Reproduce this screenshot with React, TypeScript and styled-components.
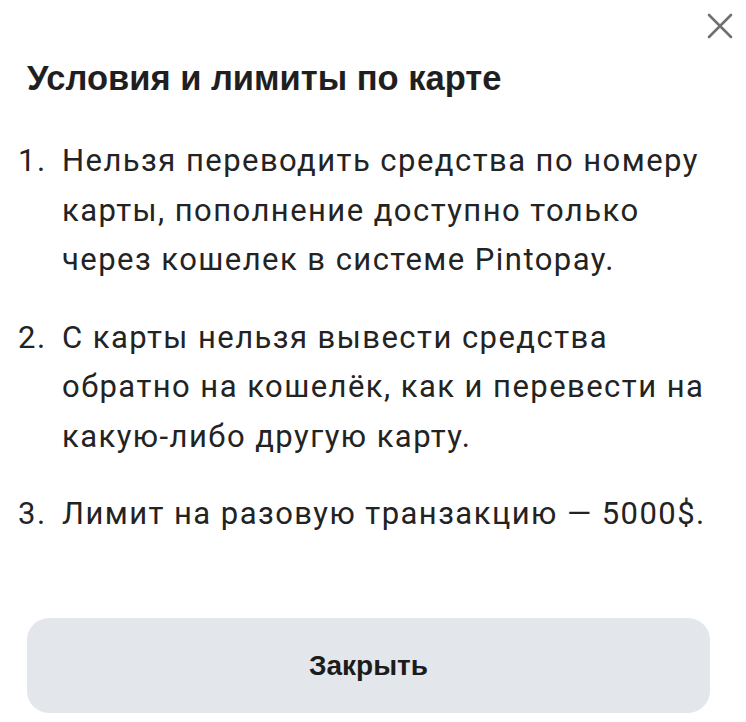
import styled, { createGlobalStyle } from "styled-components";

const GlobalStyle = createGlobalStyle`
  html, body {
    margin: 0;
    padding: 0;
    background: #ffffff;
  }
  * {
    box-sizing: border-box;
  }
`;

// each condition is kept with its own line breaks
const conditions = [
  "Нельзя переводить средства по номеру\nкарты, пополнение доступно только\nчерез кошелек в системе Pintopay.",
  "С карты нельзя вывести средства\nобратно на кошелёк, как и перевести на\nкакую-либо другую карту.",
  "Лимит на разовую транзакцию — 5000$.",
];

export default function App() {
  return (
    <>
      <GlobalStyle />
      <Sheet>
        <TopBar>
          <CloseButton aria-label="Закрыть">
            <svg width="26" height="26" viewBox="0 0 26 26" fill="none">
              <path d="M2 2L24 24M24 2L2 24" stroke="#707070" strokeWidth="2.6" strokeLinecap="round" />
            </svg>
          </CloseButton>
        </TopBar>
        <Title>Условия и лимиты по карте</Title>
        <List>
          {conditions.map((text, i) => (
            <Item key={i}>
              <Num>{i + 1}.</Num>
              <ItemText>{text}</ItemText>
            </Item>
          ))}
        </List>
        <Footer>
          <CloseAction>Закрыть</CloseAction>
        </Footer>
      </Sheet>
    </>
  );
}

const Sheet = styled.div`
  width: 746px;
  height: 722px;
  display: flex;
  flex-direction: column;
  padding: 10px 10px 9px 18px;
`;

const TopBar = styled.div`
  display: flex;
  justify-content: flex-end;
`;

const CloseButton = styled.button`
  display: flex;
  align-items: center;
  justify-content: center;
  width: 32px;
  height: 32px;
  padding: 0;
  border: none;
  background: none;
  cursor: pointer;
`;

const Title = styled.h2`
  margin: 14px 0 0 9px;
  font-family: "Liberation Sans", Arial, sans-serif;
  font-size: 34.5px;
  font-weight: 700;
  line-height: 44px;
  color: #1f1f1f;
`;

const List = styled.ol`
  list-style: none;
  margin: 36px 0 0;
  padding: 0;
  display: flex;
  flex-direction: column;
  gap: 28px;
`;

const Item = styled.li`
  display: flex;
  font-family: Roboto, "Noto Sans", sans-serif;
  font-size: 31px;
  line-height: 49.5px;
  letter-spacing: 1.45px;
  color: #232323;
`;

const Num = styled.span`
  flex: 0 0 44px;
`;

const ItemText = styled.span`
  flex: 1;
  white-space: pre-line;
`;

const Footer = styled.div`
  margin-top: auto;
  padding: 0 26px 0 9px;
`;

const CloseAction = styled.button`
  width: 100%;
  height: 95px;
  border: none;
  border-radius: 22px;
  background: #e3e6ea;
  font-family: "Liberation Sans", Arial, sans-serif;
  font-size: 28px;
  font-weight: 700;
  color: #1c1c1c;
  cursor: pointer;
`;
